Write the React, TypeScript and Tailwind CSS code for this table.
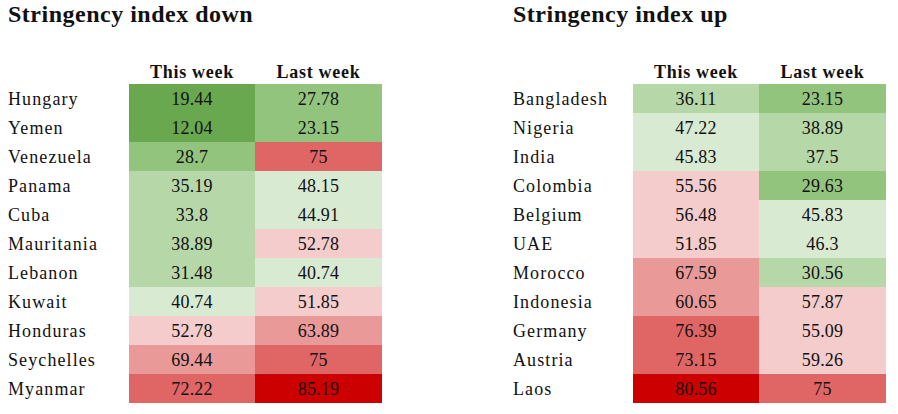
import React from "react";

type Row = { name: string; a: string; ac: string; b: string; bc: string };

const G1 = "bg-[#6aa84f]";
const G2 = "bg-[#93c47d]";
const G3 = "bg-[#b6d7a8]";
const G4 = "bg-[#d9ead3]";
const R4 = "bg-[#f4cccc]";
const R3 = "bg-[#ea9999]";
const R2 = "bg-[#e06666]";
const R1 = "bg-[#cc0000]";

const down: Row[] = [
  { name: "Hungary", a: "19.44", ac: G1, b: "27.78", bc: G2 },
  { name: "Yemen", a: "12.04", ac: G1, b: "23.15", bc: G2 },
  { name: "Venezuela", a: "28.7", ac: G2, b: "75", bc: R2 },
  { name: "Panama", a: "35.19", ac: G3, b: "48.15", bc: G4 },
  { name: "Cuba", a: "33.8", ac: G3, b: "44.91", bc: G4 },
  { name: "Mauritania", a: "38.89", ac: G3, b: "52.78", bc: R4 },
  { name: "Lebanon", a: "31.48", ac: G3, b: "40.74", bc: G4 },
  { name: "Kuwait", a: "40.74", ac: G4, b: "51.85", bc: R4 },
  { name: "Honduras", a: "52.78", ac: R4, b: "63.89", bc: R3 },
  { name: "Seychelles", a: "69.44", ac: R3, b: "75", bc: R2 },
  { name: "Myanmar", a: "72.22", ac: R2, b: "85.19", bc: R1 },
];

const up: Row[] = [
  { name: "Bangladesh", a: "36.11", ac: G3, b: "23.15", bc: G2 },
  { name: "Nigeria", a: "47.22", ac: G4, b: "38.89", bc: G3 },
  { name: "India", a: "45.83", ac: G4, b: "37.5", bc: G3 },
  { name: "Colombia", a: "55.56", ac: R4, b: "29.63", bc: G2 },
  { name: "Belgium", a: "56.48", ac: R4, b: "45.83", bc: G4 },
  { name: "UAE", a: "51.85", ac: R4, b: "46.3", bc: G4 },
  { name: "Morocco", a: "67.59", ac: R3, b: "30.56", bc: G3 },
  { name: "Indonesia", a: "60.65", ac: R3, b: "57.87", bc: R4 },
  { name: "Germany", a: "76.39", ac: R2, b: "55.09", bc: R4 },
  { name: "Austria", a: "73.15", ac: R2, b: "59.26", bc: R4 },
  { name: "Laos", a: "80.56", ac: R1, b: "75", bc: R2 },
];

function Panel({ title, rows, nameW }: { title: string; rows: Row[]; nameW: string }) {
  return (
    <div className="flex flex-col pl-2">
      <div className="h-[60px] text-[24px] leading-[29px] font-bold tracking-[0.5px] text-[#111]">{title}</div>
      <div className="flex h-[24px] text-[18px] leading-[25px] font-bold tracking-[0.7px] text-[#111]">
        <div className={nameW} />
        <div className="w-[126px] text-center">This week</div>
        <div className="w-[127px] text-center">Last week</div>
      </div>
      {rows.map((r) => (
        <div key={r.name} className="flex h-[29px] items-center text-[18px] leading-[30px] text-[#111]">
          <div className={`${nameW} tracking-[1.1px]`}>{r.name}</div>
          <div className={`w-[126px] h-full text-center tracking-[0.2px] ${r.ac}`}>{r.a}</div>
          <div className={`w-[127px] h-full text-center tracking-[0.2px] ${r.bc}`}>{r.b}</div>
        </div>
      ))}
    </div>
  );
}

export default function App() {
  return (
    <div
      className="w-[898px] h-[414px] bg-white flex"
      style={{ fontFamily: '"Liberation Serif", "Times New Roman", serif' }}
    >
      <div className="w-[505px]">
        <Panel title="Stringency index down" rows={down} nameW="w-[121px]" />
      </div>
      <div className="flex-1">
        <Panel title="Stringency index up" rows={up} nameW="w-[120px]" />
      </div>
    </div>
  );
}
